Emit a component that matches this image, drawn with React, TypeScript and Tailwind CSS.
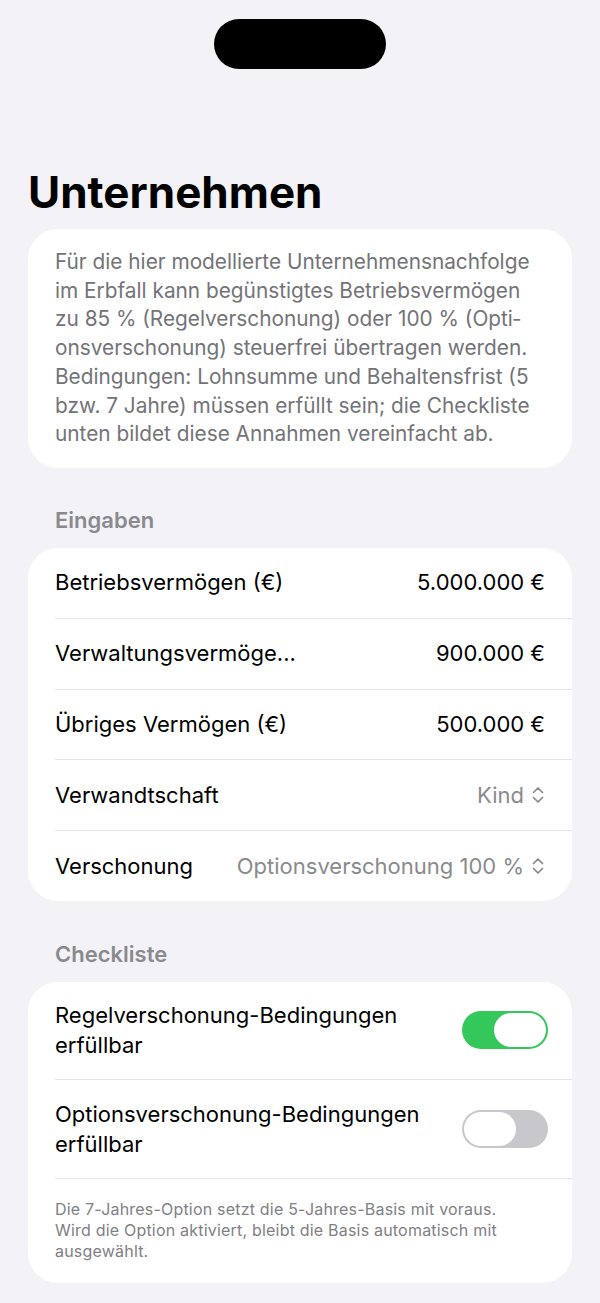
import React from 'react';

const inputs = [
  { label: 'Betriebsvermögen (€)', value: '5.000.000 €' },
  { label: 'Verwaltungsvermöge...', value: '900.000 €' },
  { label: 'Übriges Vermögen (€)', value: '500.000 €' },
];

const pickers = [
  { label: 'Verwandtschaft', value: 'Kind' },
  { label: 'Verschonung', value: 'Optionsverschonung 100 %' },
];

const UpDown = () => (
  <svg width="14" height="20" viewBox="0 0 14 20" fill="none" stroke="#8a8a8e" strokeWidth="1.7" strokeLinecap="round" strokeLinejoin="round">
    <path d="M2.5 7.5 7 3l4.5 4.5" />
    <path d="M2.5 12.5 7 17l4.5-4.5" />
  </svg>
);

const Toggle = ({ on }: { on: boolean }) => (
  <div
    className={
      on
        ? 'flex h-[38px] w-[86px] shrink-0 items-center justify-end rounded-full bg-[#34c759] p-[2px]'
        : 'flex h-[38px] w-[86px] shrink-0 items-center justify-start rounded-full bg-[#c8c8cc] p-[2px]'
    }
  >
    <div className="h-[34px] w-[52px] rounded-full bg-white" />
  </div>
);

const App = () => {
  return (
    <div
      className="min-h-[1303px] w-[600px] bg-[#f2f2f7] px-[28px]"
      style={{ fontFamily: 'Inter, "Noto Sans", sans-serif' }}
    >
      {/* Dynamic Island */}
      <div className="flex justify-center pt-[19px]">
        <div className="h-[50px] w-[172px] rounded-full bg-black" />
      </div>

      <h1 className="mt-[96px] text-[44px] font-bold leading-[54px] text-black">Unternehmen</h1>

      {/* Intro */}
      <div className="mt-[10px] rounded-[30px] bg-white px-[27px] py-[19px]">
        <p className="text-[20.8px] leading-[28.7px] text-[#737378]">
          Für die hier modellierte Unternehmensnachfolge im Erbfall kann begünstigtes Betriebsvermögen
          zu 85 % (Regelverschonung) oder 100 % (Opti&shy;onsverschonung) steuerfrei übertragen werden.
          Bedingungen: Lohnsumme und Behaltensfrist (5 bzw. 7 Jahre) müssen erfüllt sein; die Checkliste
          unten bildet diese Annahmen vereinfacht ab.
        </p>
      </div>

      {/* Eingaben */}
      <h2 className="mt-[37px] px-[27px] text-[22px] font-semibold leading-[30px] text-[#8a8a8e]">
        Eingaben
      </h2>
      <div className="mt-[13px] rounded-[30px] bg-white pl-[27px]">
        {inputs.map((row) => (
          <div key={row.label} className="border-b border-[#e3e3e8] pr-[27px]">
            <div className="flex h-[69.8px] items-center justify-between text-[22px] text-black">
              <span>{row.label}</span>
              <span>{row.value}</span>
            </div>
          </div>
        ))}
        {pickers.map((row, i) => (
          <div
            key={row.label}
            className={i === 0 ? 'border-b border-[#e3e3e8] pr-[27px]' : 'pr-[27px]'}
          >
            <div className="flex h-[69.8px] items-center justify-between text-[22px]">
              <span className="text-black">{row.label}</span>
              <span className="flex items-center gap-[7px] text-[#8a8a8e]">
                {row.value}
                <UpDown />
              </span>
            </div>
          </div>
        ))}
      </div>

      {/* Checkliste */}
      <h2 className="mt-[38px] px-[27px] text-[22px] font-semibold leading-[30px] text-[#8a8a8e]">
        Checkliste
      </h2>
      <div className="mt-[13px] rounded-[30px] bg-white pl-[27px]">
        <div className="border-b border-[#e3e3e8] pr-[24px]">
          <div className="flex items-center justify-between gap-4 py-[18.5px]">
            <span className="w-[370px] text-[22px] leading-[30px] text-black">
              Regelverschonung-Bedingungen erfüllbar
            </span>
            <Toggle on />
          </div>
        </div>
        <div className="border-b border-[#e3e3e8] pr-[24px]">
          <div className="flex items-center justify-between gap-4 py-[19px]">
            <span className="w-[370px] text-[22px] leading-[30px] text-black">
              Optionsverschonung-Bedingungen erfüllbar
            </span>
            <Toggle on={false} />
          </div>
        </div>
        <p className="pb-[21px] pr-[40px] pt-[20px] text-[16px] leading-[21px] tracking-[0.2px] text-[#808085]">
          Die 7-Jahres-Option setzt die 5-Jahres-Basis mit voraus. Wird die Option aktiviert, bleibt die
          Basis automatisch mit ausgewählt.
        </p>
      </div>
    </div>
  );
};

export default App;
